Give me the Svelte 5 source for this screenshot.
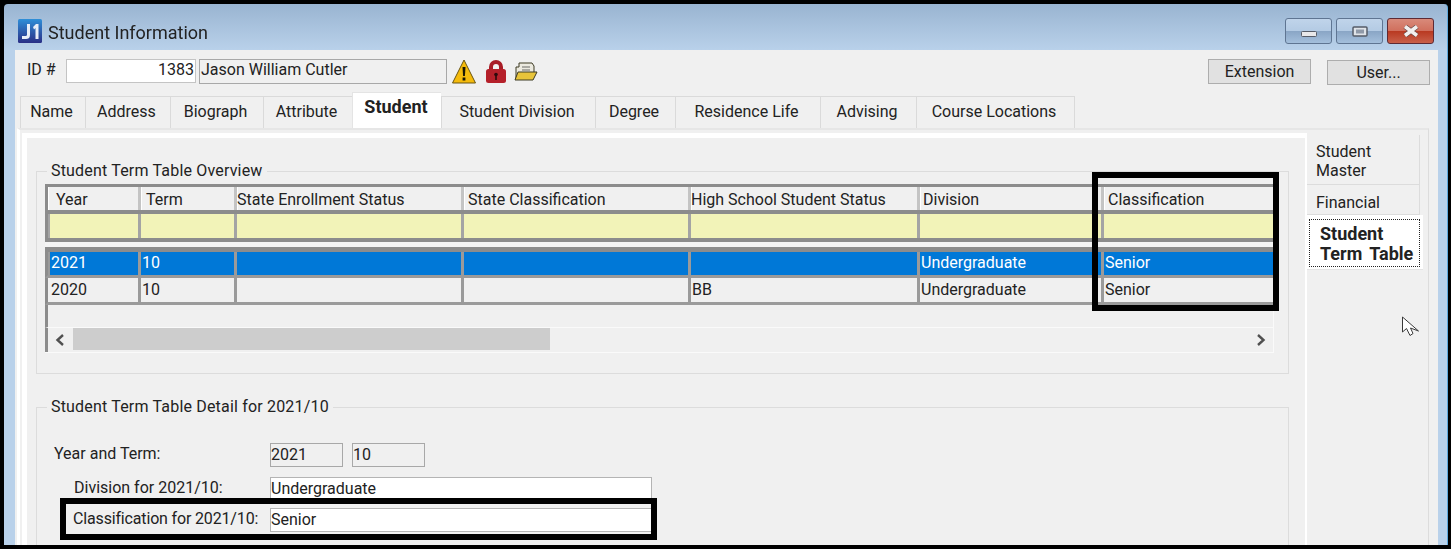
<script>
	const tabs = [
		{ label: 'Name', width: 65 },
		{ label: 'Address', width: 85 },
		{ label: 'Biograph', width: 93 },
		{ label: 'Attribute', width: 89 },
		{ label: 'Student', width: 89, active: true },
		{ label: 'Student Division', width: 154 },
		{ label: 'Degree', width: 80 },
		{ label: 'Residence Life', width: 145 },
		{ label: 'Advising', width: 96 },
		{ label: 'Course Locations', width: 159 }
	];

	const columns = [
		{ label: 'Year', pad: 8 },
		{ label: 'Term', pad: 5 },
		{ label: 'State Enrollment Status', pad: 0 },
		{ label: 'State Classification', pad: 4 },
		{ label: 'High School Student Status', pad: 0 },
		{ label: 'Division', pad: 3 },
		{ label: 'Classification', pad: 4 }
	];

	const rows = [
		{ cells: ['2021', '10', '', '', '', 'Undergraduate', 'Senior'], selected: true },
		{ cells: ['2020', '10', '', '', 'BB', 'Undergraduate', 'Senior'] }
	];
</script>

<div class="frame">
	<div class="window">
		<header class="titlebar">
			<svg class="logo" viewBox="0 0 24 24" width="24" height="24">
				<defs>
					<linearGradient id="logoFill" x1="0" y1="0" x2="0" y2="1">
						<stop offset="0" stop-color="#2f8fd8" />
						<stop offset="1" stop-color="#2a2f86" />
					</linearGradient>
				</defs>
				<rect width="24" height="24" rx="1.5" fill="url(#logoFill)" />
				<path d="M9 5h3v11c0 3-2 4-4 4H4v-3h3c1.400 0 2-.5 2-1.500z" fill="#e8eef8" />
				<path d="M15 8l3-3h2.500v15h-3V9l-1.500 1.500z" fill="#e8eef8" />
			</svg>
			<span class="title">Student Information</span>
			<div class="controls">
				<span class="ctl min">
					<svg viewBox="0 0 16 6" width="16" height="6"><rect x=".5" y=".5" width="15" height="5" rx="1" fill="#e8e8ea" stroke="#565c68" /></svg>
				</span>
				<span class="ctl">
					<svg viewBox="0 0 16 11" width="16" height="11"><rect x="1" y="1" width="14" height="9" rx="1" fill="#dfe3e8" stroke="#565c68" stroke-width="1.500" /><rect x="4" y="3.500" width="8" height="4" fill="#8f99a8" /></svg>
				</span>
				<span class="ctl close">
					<svg viewBox="0 0 18 12" width="18" height="12"><path d="M3 1.500l12 9M15 1.500l-12 9" stroke="#6b4a48" stroke-width="5" /><path d="M3 1.500l12 9M15 1.500l-12 9" stroke="#f2efee" stroke-width="3.500" /></svg>
				</span>
			</div>
		</header>

		<div class="client">
			<div class="idrow">
				<span class="idlabel">ID #</span>
				<span class="idbox">1383</span>
				<span class="namebox">Jason William Cutler</span>
				<svg class="warn" viewBox="0 0 24 25" width="24" height="25">
					<path d="M12 1L23.500 24H.5z" fill="#f5bb0c" stroke="#6a5410" stroke-linejoin="round" />
					<path d="M10.500 8h3l-.6 9h-1.800z" fill="#1c1804" />
					<rect x="10.600" y="18.500" width="2.800" height="3" fill="#1c1804" />
				</svg>
				<svg class="lock" viewBox="0 0 20 23" width="20" height="23">
					<path d="M5 11V7a5 5 0 0 1 10 0v4" fill="none" stroke="#a81c26" stroke-width="4" />
					<rect x="0" y="9" width="20" height="14" rx="2.500" fill="#b5202a" />
					<circle cx="10" cy="14.500" r="1.800" fill="#2c0a0c" />
					<rect x="9.200" y="15" width="1.600" height="5" fill="#2c0a0c" />
				</svg>
				<svg class="folder" viewBox="0 0 24 19" width="24" height="19">
					<path d="M2 17V5h3V1h13l2 3v6" fill="#eceae0" stroke="#3d3a22" />
					<path d="M8 5h8M8 8h8" stroke="#6b6b66" />
					<path d="M1 18l3-8h19l-4 8z" fill="#e8c43a" stroke="#3d3a22" stroke-linejoin="round" />
				</svg>
				<button class="btn ext">Extension</button>
				<button class="btn user">User...</button>
			</div>

			<nav class="tabs">
				{#each tabs as tab}
					<span class="tab" class:active={tab.active} style="width: {tab.width}px">{tab.label}</span>
				{/each}
			</nav>

			<div class="tabpanel">
				<div class="page">
					<fieldset class="group overview">
						<legend>Student Term Table Overview</legend>
						<div class="grid">
							<div class="row head">
								{#each columns as col}
									<span class="cell" style="padding-left: {col.pad}px">{col.label}</span>
								{/each}
							</div>
							<div class="row filter">
								{#each columns as col}
									<span class="cell"></span>
								{/each}
							</div>
							<div class="spacer"></div>
							{#each rows as row}
								<div class="row data" class:selected={row.selected}>
									{#each row.cells as cell}
										<span class="cell">{cell}</span>
									{/each}
								</div>
							{/each}
							<div class="blank"></div>
							<div class="scrollbar">
								<svg class="arrow" viewBox="0 0 10 12" width="10" height="12"><path d="M8 1L2.500 6 8 11" fill="none" stroke="#505050" stroke-width="2.400" /></svg>
								<div class="track"><div class="thumb"></div></div>
								<svg class="arrow" viewBox="0 0 10 12" width="10" height="12"><path d="M2 1l5.500 5L2 11" fill="none" stroke="#505050" stroke-width="2.400" /></svg>
							</div>
						</div>
					</fieldset>

					<fieldset class="group detail">
						<legend>Student Term Table Detail for 2021/10</legend>
						<div class="form">
							<span class="label first">Year and Term:</span>
							<div class="pair">
								<span class="ro">2021</span>
								<span class="ro">10</span>
							</div>
							<span class="label">Division for 2021/10:</span>
							<span class="field">Undergraduate</span>
							<span class="label tight">Classification for 2021/10:</span>
							<span class="field">Senior</span>
						</div>
					</fieldset>
				</div>

				<aside class="side">
					<span class="stab master">Student<br />Master</span>
					<span class="stab fin">Financial</span>
					<span class="stab current"><span class="focus">Student<br />Term Table</span></span>
				</aside>
			</div>
		</div>
	</div>

	<div class="mark mark-col"></div>
	<div class="mark mark-field"></div>
	<svg class="cursor" viewBox="0 0 20 21" width="20" height="21">
		<path d="M1.500 1v15l4-3.500 3.500 7 3-2-2.500-5.500 8 3z" fill="#fff" stroke="#3a3a3a" stroke-linejoin="round" />
	</svg>
</div>

<style>
	:global(body) {
		margin: 0;
		background: #000;
	}

	.frame {
		position: relative;
		width: 1451px;
		height: 549px;
		box-sizing: border-box;
		padding: 4px 3px 4px 4px;
		background: #000;
		overflow: hidden;
		font-family: Roboto, 'Noto Sans', sans-serif;
		font-size: 16px;
		color: #222;
	}

	.window {
		height: 100%;
		display: flex;
		flex-direction: column;
		box-sizing: border-box;
		padding: 0 9px 0 11px;
		background: linear-gradient(#99b4d1 0, #b9d1ea 46px);
		border-right: 1px solid #5ea9de;
		border-radius: 4px 4px 0 0;
		overflow: hidden;
		filter: blur(0.35px);
	}

	.titlebar {
		height: 46px;
		flex: none;
		display: flex;
		align-items: center;
	}

	.logo {
		margin: 7px 0 0 3px;
	}

	.title {
		margin: 10px 0 0 6px;
		font-size: 18px;
	}

	.controls {
		margin: 8px 4px 0 auto;
		display: flex;
		gap: 4px;
	}

	.ctl {
		width: 47px;
		height: 26px;
		box-sizing: border-box;
		display: flex;
		align-items: center;
		justify-content: center;
		border: 1px solid #5f7592;
		border-radius: 3px;
		background: linear-gradient(#c0d4ea 0, #b4cbe4 48%, #8aa6c6 52%, #a4bfdc 100%);
	}

	.min svg {
		margin-top: 6px;
	}

	.close {
		border-color: #5e2a34;
		background: linear-gradient(#d98a7a 0, #d0705e 48%, #b93a22 52%, #c9604a 100%);
	}

	.client {
		flex: 1;
		min-height: 0;
		background: #f0f0f0;
		display: flex;
		flex-direction: column;
		padding-left: 2px;
	}

	.idrow {
		height: 42px;
		flex: none;
		display: flex;
		align-items: center;
	}

	.idlabel {
		margin: -3px 0 0 10px;
		width: 39px;
	}

	.idbox {
		width: 130px;
		height: 24px;
		box-sizing: border-box;
		background: #fff;
		border: 1px solid #c4c4c4;
		text-align: right;
		line-height: 20px;
		padding-right: 1px;
	}

	.namebox {
		margin-left: 3px;
		width: 248px;
		height: 25px;
		box-sizing: border-box;
		border: 1px solid #a8a8a8;
		line-height: 20px;
		padding-left: 1px;
	}

	.warn {
		margin-left: 5px;
	}

	.lock {
		margin-left: 10px;
	}

	.folder {
		margin-left: 8px;
	}

	.btn {
		width: 103px;
		height: 25px;
		padding: 0;
		box-sizing: border-box;
		font: inherit;
		color: inherit;
		background: #e1e1e1;
		border: 1px solid #adadad;
	}

	.ext {
		margin-left: auto;
	}

	.user {
		margin: 2px 8px 0 16px;
	}

	.tabs {
		height: 36px;
		flex: none;
		display: flex;
		align-items: flex-end;
		padding-left: 3px;
	}

	.tab {
		height: 32px;
		box-sizing: border-box;
		padding-right: 3px;
		border: 1px solid #dadada;
		border-right-width: 0;
		border-bottom: 0;
		text-align: center;
		line-height: 29px;
	}

	.tab:last-child {
		border-right-width: 1px;
	}

	.tab.active {
		height: 36px;
		padding-right: 2px;
		background: #fff;
		border-color: #e4e4e4;
		font-weight: 700;
		font-size: 18px;
		line-height: 28px;
	}

	.tabpanel {
		flex: 1;
		min-height: 0;
		margin-right: 9px;
		display: flex;
		padding: 3px 0 0 2px;
		border-top: 2px solid #e6e6e6;
		border-left: 3px solid #fff;
		border-right: 1px solid #dcdcdc;
	}

	.page {
		width: 1285px;
		flex: none;
		box-sizing: border-box;
		border-top: 5px solid #fff;
		border-left: 5px solid #fff;
		border-right: 2px solid #fff;
		padding: 23px 16px 0 9px;
	}

	.group {
		margin: 0;
		padding: 0;
		border: 1px solid #dcdcdc;
		min-width: 0;
	}

	.group legend {
		margin-left: 10px;
		padding: 0 4px;
		line-height: 20px;
		letter-spacing: 0.18px;
	}

	.overview {
		height: 213px;
		box-sizing: border-box;
	}

	.grid {
		height: 169px;
		box-sizing: border-box;
		margin: 3px 14px 0 8px;
		border-top: 3px solid #8c8c8c;
		border-bottom: 1px solid #fafafa;
		border-right: 1px solid #fafafa;
		display: flex;
		flex-direction: column;
		overflow: hidden;
	}

	.row {
		display: grid;
		grid-template-columns: 90px 93px 224px 224px 226px 181px 1fr;
		column-gap: 3px;
		background: #9a9a9a;
		flex: none;
		box-sizing: border-box;
		border-left: 3px solid #8c8c8c;
	}

	.cell {
		white-space: nowrap;
		overflow: hidden;
	}

	.head {
		height: 27px;
		background: #c4c4c4;
		border-bottom: 4px solid #8c8c8c;
		line-height: 25px;
	}

	.head .cell {
		background: #f0f0f0;
		box-shadow: inset 1px 0 #fff;
	}

	.filter {
		height: 28px;
		border-bottom: 4px solid #8c8c8c;
		padding-left: 2px;
		grid-template-columns: 88px 93px 224px 224px 226px 181px 1fr;
		background: #a4a4a4;
	}

	.filter .cell {
		background: #f2f3b8;
	}

	.spacer {
		height: 5px;
		background: #f4f4f4;
		flex: none;
	}

	.data {
		height: 27px;
		border-bottom: 3px solid #9a9a9a;
		line-height: 24px;
	}

	.data .cell {
		background: #f0f0f0;
		padding-left: 1px;
	}

	.data .cell:first-child {
		padding-left: 3px;
	}

	.selected {
		height: 31px;
		border-top: 5px solid #8c8c8c;
		padding-left: 2px;
		grid-template-columns: 88px 93px 224px 224px 226px 181px 1fr;
		line-height: 22px;
	}

	.selected .cell {
		background: #0078d7;
		color: #fff;
	}

	.selected .cell:first-child {
		padding-left: 1px;
	}

	.blank {
		height: 22px;
		flex: none;
		border-left: 3px solid #8c8c8c;
	}

	.scrollbar {
		height: 25px;
		flex: none;
		display: flex;
		align-items: center;
		background: #f0f0f0;
		border-top: 1px solid #fafafa;
		border-left: 3px solid #8c8c8c;
		box-sizing: border-box;
	}

	.arrow {
		flex: none;
		margin: 0 7px;
	}

	.arrow:first-child {
		margin-right: 8px;
	}

	.track {
		flex: 1;
		height: 22px;
		align-self: flex-start;
	}

	.thumb {
		width: 477px;
		height: 100%;
		background: #cdcdcd;
	}

	.detail {
		margin-top: 23px;
		height: 170px;
		box-sizing: border-box;
	}

	.form {
		margin: 26px 0 0 17px;
		display: grid;
		grid-template-columns: 216px 382px;
		grid-template-rows: 34px 31px 24px;
		align-items: start;
		line-height: 22px;
	}

	.label {
		padding-left: 20px;
		white-space: nowrap;
	}

	.first {
		padding-left: 0;
	}

	.tight {
		padding-left: 19px;
		letter-spacing: -0.16px;
	}

	.pair {
		display: flex;
		gap: 9px;
	}

	.ro {
		width: 73px;
		height: 24px;
		box-sizing: border-box;
		border: 1px solid #a8a8a8;
	}

	.field {
		height: 24px;
		box-sizing: border-box;
		background: #fff;
		border: 1px solid #b4b4b4;
	}

	.side {
		flex: 1;
		padding-top: 2px;
		display: flex;
		flex-direction: column;
		align-items: flex-start;
		line-height: 19px;
	}

	.stab {
		width: 113px;
		box-sizing: border-box;
		border-bottom: 1px solid #dcdcdc;
		border-right: 1px solid #dcdcdc;
		padding-left: 9px;
	}

	.master {
		height: 50px;
		padding-top: 7px;
	}

	.fin {
		height: 30px;
		padding-top: 8px;
	}

	.current {
		width: 116px;
		height: 55px;
		padding: 4px 0 0 2px;
		background: #fff;
		border: 0;
		border-bottom: 1px solid #e4e4e4;
		font-weight: 700;
		font-size: 18px;
		word-spacing: 3px;
		line-height: 20px;
	}

	.focus {
		display: block;
		width: 111px;
		height: 48px;
		box-sizing: border-box;
		border: 1px dotted #222;
		padding: 4px 0 0 10px;
		white-space: nowrap;
	}

	.mark {
		position: absolute;
		border: 6px solid #000;
		box-sizing: border-box;
	}

	.mark-col {
		left: 1092px;
		top: 172px;
		width: 187px;
		height: 139px;
	}

	.mark-field {
		left: 60px;
		top: 498px;
		width: 597px;
		height: 42px;
	}

	.cursor {
		position: absolute;
		left: 1401px;
		top: 316px;
	}
</style>
